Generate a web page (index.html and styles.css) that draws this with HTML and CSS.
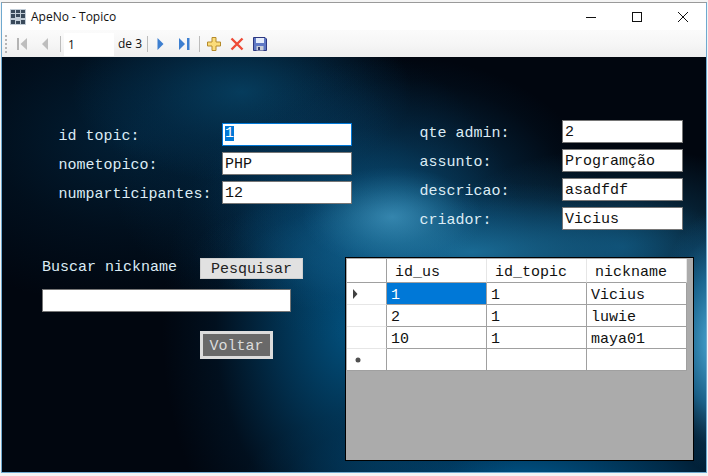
FILE: index.html
```html
<!DOCTYPE html>
<html lang="pt">
<head>
<meta charset="utf-8">
<title>ApeNo - Topico</title>
<link rel="stylesheet" href="styles.css">
</head>
<body>
<div class="window">
  <header class="titlebar">
    <svg class="app-icon" width="16" height="16" viewBox="0 0 16 16"><rect width="16" height="16" fill="#c3ced8"/><g fill="#3a4a5b"><rect x="1" y="1" width="4" height="3"/><rect x="6" y="1" width="4" height="3"/><rect x="11" y="1" width="4" height="3"/><rect x="1" y="5" width="4" height="4"/><rect x="11" y="5" width="4" height="4"/><rect x="1" y="11" width="4" height="4"/><rect x="11" y="11" width="4" height="4"/><rect x="6" y="5" width="4" height="3"/><rect x="6" y="12" width="4" height="3"/></g></svg>
    <span class="title">ApeNo - Topico</span>
    <div class="win-controls">
      <svg class="win-btn" width="46" height="14" viewBox="0 0 46 14"><path d="M18 7.5h10" stroke="#111" fill="none"/></svg>
      <svg class="win-btn" width="46" height="14" viewBox="0 0 46 14"><rect x="18.5" y="2.5" width="9" height="9" stroke="#111" fill="none"/></svg>
      <svg class="win-btn" width="46" height="14" viewBox="0 0 46 14"><path d="M18 2l10 10M28 2L18 12" stroke="#111" fill="none"/></svg>
    </div>
  </header>
  <nav class="toolbar">
    <svg class="grip" width="3" height="20" viewBox="0 0 3 20"><g fill="#b5b5b5"><rect y="1" width="2" height="2"/><rect y="5" width="2" height="2"/><rect y="9" width="2" height="2"/><rect y="13" width="2" height="2"/><rect y="17" width="2" height="2"/></g></svg>
    <svg class="tool first" width="12" height="12" viewBox="0 0 12 12"><path d="M1 0h2v12H1z" fill="#b4b4b4"/><path d="M11 0v12L4.500 6z" fill="#bdbdbd"/></svg>
    <svg class="tool prev" width="8" height="12" viewBox="0 0 8 12"><path d="M7 0v12L1 6z" fill="#bdbdbd"/></svg>
    <span class="sep sep-a"></span>
    <span class="page-box">1</span>
    <span class="page-of">de 3</span>
    <span class="sep sep-b"></span>
    <svg class="tool next" width="7" height="12" viewBox="0 0 7 12"><path d="M0.500 0v12L6.500 6z" fill="#3d7fd0"/></svg>
    <svg class="tool last" width="11" height="12" viewBox="0 0 11 12"><path d="M0 0v12L6 6z" fill="#3d7fd0"/><path d="M8 0h2.500v12H8z" fill="#3d7fd0"/></svg>
    <span class="sep sep-c"></span>
    <svg class="tool add" width="14" height="14" viewBox="0 0 14 14"><path d="M5 .500h4v4.500h4.500v4H9v4.500H5V9H.5V5H5z" fill="#fbdc7a" stroke="#b58a2a"/></svg>
    <svg class="tool del" width="14" height="14" viewBox="0 0 14 14"><path d="M1.500 1.500l11 11M12.500 1.500l-11 11" stroke="#ee4a36" stroke-width="2.400" fill="none"/></svg>
    <svg class="tool save" width="14" height="14" viewBox="0 0 14 14"><path d="M.5.500h11.500l1.500 1.500v11.500H.5z" fill="#5f78c4" stroke="#2c3780"/><rect x="3" y="1" width="8" height="5" fill="#e6edfb"/><rect x="3.500" y="9" width="7" height="4.500" fill="#c9ced8"/><rect x="5" y="10" width="2" height="3" fill="#333c70"/></svg>
  </nav>
  <main class="content">
    <section class="top-row">
      <div class="form form-left">
        <label class="lbl">id topic:</label><div class="field focused"><span class="sel">1</span></div>
        <label class="lbl">nometopico:</label><div class="field">PHP</div>
        <label class="lbl">numparticipantes:</label><div class="field">12</div>
      </div>
      <div class="form form-right">
        <label class="lbl">qte admin:</label><div class="field">2</div>
        <label class="lbl">assunto:</label><div class="field">Programção</div>
        <label class="lbl">descricao:</label><div class="field">asadfdf</div>
        <label class="lbl">criador:</label><div class="field">Vicius</div>
      </div>
    </section>
    <section class="bottom-row">
      <div class="search">
        <div class="search-head">
          <span class="search-label">Buscar nickname</span>
          <button class="btn-search">Pesquisar</button>
        </div>
        <div class="field field-wide"></div>
        <button class="btn-back">Voltar</button>
      </div>
      <div class="datagrid">
        <div class="dg-rows">
          <div class="dg-row dg-head"><span class="cell rh"></span><span class="cell">id_us</span><span class="cell">id_topic</span><span class="cell">nickname</span></div>
          <div class="dg-row"><span class="cell rh"><svg width="6" height="10" viewBox="0 0 6 10"><path d="M1 0v10l4.500-5z" fill="#404040"/></svg></span><span class="cell selected">1</span><span class="cell">1</span><span class="cell">Vicius</span></div>
          <div class="dg-row"><span class="cell rh"></span><span class="cell">2</span><span class="cell">1</span><span class="cell">luwie</span></div>
          <div class="dg-row"><span class="cell rh"></span><span class="cell">10</span><span class="cell">1</span><span class="cell">maya01</span></div>
          <div class="dg-row"><span class="cell rh star"><svg width="6" height="6" viewBox="0 0 6 6"><circle cx="3" cy="3" r="2.500" fill="#505050"/></svg></span><span class="cell"></span><span class="cell"></span><span class="cell"></span></div>
        </div>
      </div>
    </section>
  </main>
</div>
</body>
</html>
```
FILE: styles.css
```css
* { box-sizing: border-box; }
html, body { margin: 0; height: 100%; background: #f4f4f4; overflow: hidden; }
body { padding: 2px 1px 3px 1px; font-family: "Liberation Mono", monospace; font-size: 15px; }
.window { height: 471px; display: flex; flex-direction: column; border: 1px solid #6fa9cf; border-top-color: #9a9a9a; background: #fff; }

.titlebar { height: 27px; flex: none; display: flex; align-items: center; background: #fff; padding-left: 8px; font-family: "Open Sans", sans-serif; font-size: 12px; color: #111; }
.app-icon { margin-right: 5px; }
.title { flex: 1; }
.win-controls { display: flex; }
.win-btn { display: block; }

.toolbar { height: 27px; flex: none; display: flex; align-items: center; padding-left: 3px; background: linear-gradient(#fbfbfb, #f6f6f6 50%, #eeeeee); font-family: "Open Sans", sans-serif; font-size: 12px; color: #111; }
.grip { margin-right: 8px; }
.tool { display: block; flex: none; }
.prev { margin-left: 13px; }
.sep { width: 1px; height: 16px; background: #bcbcbc; flex: none; }
.sep-a { margin: 0 3px 0 11px; }
.page-box { width: 50px; height: 23px; background: #fff; padding-left: 4px; line-height: 23px; flex: none; margin-top: 1px; }
.page-of { margin-left: 4px; width: 29px; }
.next { margin-left: 9px; }
.last { margin-left: 15px; }
.sep-c { margin: 0 7px 0 9px; }
.del { margin-left: 9px; }
.save { margin-left: 9px; }

.content { flex: 1; min-height: 0; color: #dcecf5;
  background:
    radial-gradient(ellipse 90px 50px at 390px 160px, rgba(70,155,195,.7), rgba(50,135,175,.35) 55%, rgba(40,120,165,.1) 85%, transparent 100%),
    radial-gradient(ellipse 60px 130px at 712px 285px, rgba(75,170,215,1), rgba(35,125,175,.75) 50%, rgba(20,100,150,.25) 80%, transparent 100%),
    radial-gradient(ellipse 280px 70px at 470px 195px, rgba(30,120,165,.8), rgba(20,100,145,.45) 50%, rgba(15,90,135,.12) 80%, transparent 100%),
    radial-gradient(ellipse 190px 100px at 620px 190px, rgba(20,105,150,.65), rgba(20,105,150,.25) 55%, transparent 100%),
    radial-gradient(ellipse 200px 150px at 400px 150px, rgba(12,90,135,.7), rgba(10,80,125,.3) 55%, rgba(8,70,110,.08) 85%, transparent 100%),
    radial-gradient(ellipse 190px 280px at 350px 270px, rgba(2,85,132,.95), rgba(2,72,115,.6) 40%, rgba(2,50,85,.22) 72%, transparent 100%),
    radial-gradient(ellipse 280px 90px at 520px 425px, rgba(0,90,145,.95), rgba(0,72,118,.55) 55%, rgba(0,60,100,.12) 85%, transparent 100%),
    radial-gradient(ellipse 170px 90px at 240px 35px, rgba(6,64,98,.9), rgba(5,55,88,.45) 55%, transparent 100%),
    radial-gradient(ellipse 150px 130px at 260px 120px, rgba(3,50,82,.55), rgba(3,45,75,.2) 60%, transparent 100%),
    radial-gradient(ellipse 260px 170px at 130px 80px, rgba(2,38,64,.8), rgba(2,32,55,.35) 55%, transparent 100%),
    #01060f;
}

.top-row { display: flex; align-items: flex-start; padding: 63px 0 0 57px; }
.form { display: grid; row-gap: 6px; grid-auto-rows: 23px; align-items: center; }
.form-left { grid-template-columns: 163px 130px; margin-top: 3px; }
.form-right { grid-template-columns: 142px 121px; margin-left: 68px; }
.lbl { color: #dcecf5; white-space: pre; padding-top: 3px; margin-left: -0.500px; }

.field { height: 23px; background: #fff; border: 1px solid #767676; color: #111; padding: 1px 0 0 2px; line-height: 21px; overflow: hidden; }
.focused { border-color: #0078d7; padding-top: 2px; }
.sel { display: block; background: #0078d7; color: #fff; height: 15px; line-height: 15px; width: 9px; }
.field-wide { width: 249px; margin-top: 10px; }

.bottom-row { display: flex; align-items: flex-start; padding: 27px 0 0 40px; }
.search { width: 303px; padding-top: 1px; flex: none; }
.search-head { display: flex; align-items: flex-start; }
.search-label { width: 158px; color: #dcecf5; line-height: 16px; padding-top: 2px; }
button { font: inherit; padding: 0; margin: 0; display: block; }
.btn-search { width: 103px; height: 21px; background: #e1e1e1; border: 1px solid #cfcfcf; color: #222; line-height: 17px; padding-top: 2px; overflow: hidden; }
.btn-back { width: 73px; height: 28px; margin: 19px 0 0 158px; background: #696969; border: 3px solid #dcdcdc; color: #dcdcdc; padding-top: 2px; }

.datagrid { width: 349px; height: 204px; background: #ababab; border: 1px solid #000; padding: 1px 0 0 1px; color: #111; }
.dg-rows { width: 340px; background: #fff; }
.dg-row { display: grid; grid-template-columns: 40px 100px 100px 100px; height: 22px; }
.dg-head { height: 24px; }
.cell { display: block; border-right: 1px solid #a0a0a0; border-bottom: 1px solid #a0a0a0; padding: 2px 0 0 4px; line-height: 22px; overflow: hidden; white-space: pre; }
.dg-head .cell { padding: 2px 0 0 8px; line-height: 23px; border-right-color: #e6e6e6; }
.rh { background: #fff; border-right: 1px solid #a0a0a0; border-bottom-color: #e6e6e6; padding: 0 0 0 5px; display: flex; align-items: center; }
.dg-head .rh { border-right-color: #a0a0a0; border-bottom-color: #a0a0a0; }
.star { border-bottom-color: #a0a0a0; padding-left: 8px; }
.selected { background: #0078d7; color: #fff; }
```
